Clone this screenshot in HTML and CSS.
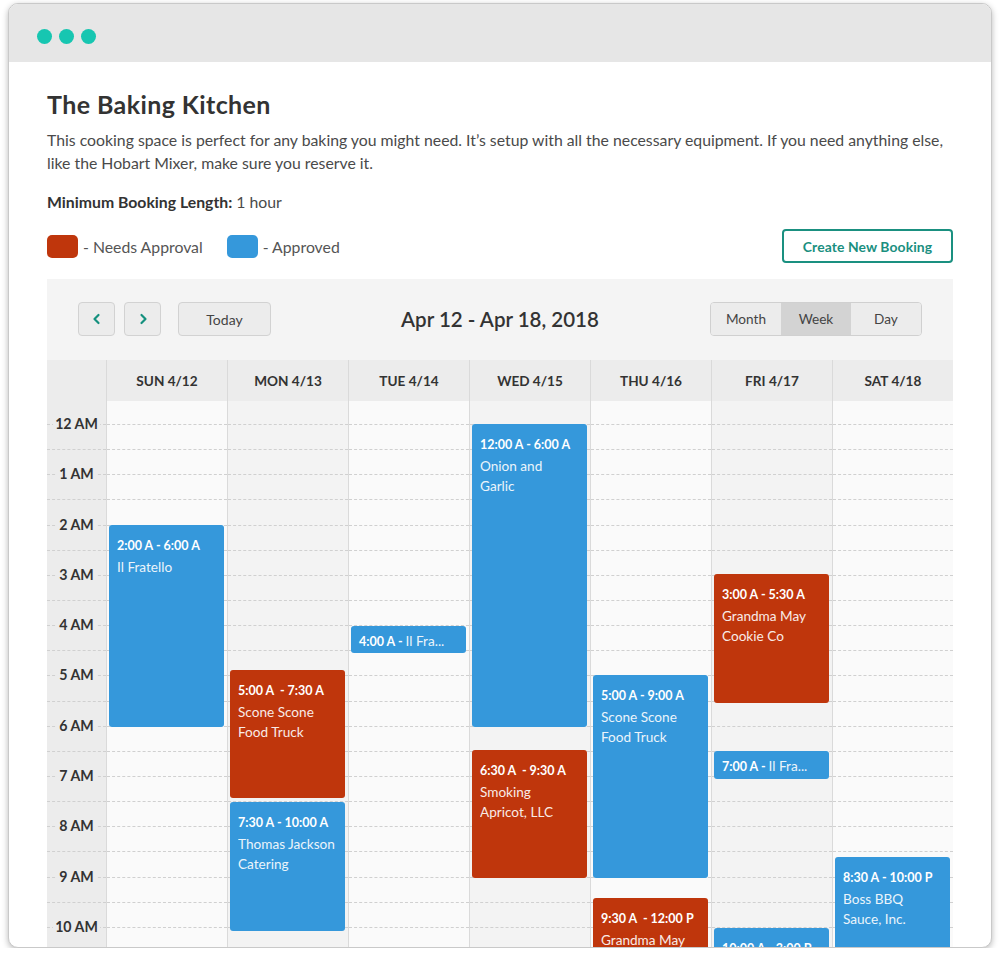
FILE: index.html
```html
<!DOCTYPE html>
<html lang="en">
<head>
<meta charset="utf-8">
<title>The Baking Kitchen</title>
<link rel="stylesheet" href="styles.css">
</head>
<body>
<div class="window">
  <div class="titlebar">
    <span class="dot"></span><span class="dot"></span><span class="dot"></span>
  </div>
  <main class="content">
    <h1 class="title">The Baking Kitchen</h1>
    <p class="desc">This cooking space is perfect for any baking you might need. It’s setup with all the necessary equipment. If you need anything else, like the Hobart Mixer, make sure you reserve it.</p>
    <p class="min"><strong>Minimum Booking Length:</strong> 1 hour</p>
    <div class="legend-row">
      <div class="legend">
        <span class="legend-item"><span class="swatch red"></span>- Needs Approval</span>
        <span class="legend-item"><span class="swatch blue"></span>- Approved</span>
      </div>
      <button class="btn-create">Create New Booking</button>
    </div>

    <section class="calendar">
      <div class="toolbar">
        <div class="nav">
          <button class="btn btn-icon" aria-label="Previous"><svg width="10" height="12" viewBox="0 0 10 12"><polyline points="6.5,2 2.5,6 6.5,10" fill="none" stroke="#14907e" stroke-width="2.2" stroke-linecap="round" stroke-linejoin="round"/></svg></button>
          <button class="btn btn-icon" aria-label="Next"><svg width="10" height="12" viewBox="0 0 10 12"><polyline points="3.5,2 7.5,6 3.5,10" fill="none" stroke="#14907e" stroke-width="2.2" stroke-linecap="round" stroke-linejoin="round"/></svg></button>
          <button class="btn btn-today">Today</button>
        </div>
        <h2 class="range">Apr 12 - Apr 18, 2018</h2>
        <div class="views">
          <button class="view">Month</button><button class="view active">Week</button><button class="view">Day</button>
        </div>
      </div>

      <div class="head">
        <div class="head-gutter"></div>
        <div class="head-day">SUN 4/12</div>
        <div class="head-day">MON 4/13</div>
        <div class="head-day">TUE 4/14</div>
        <div class="head-day">WED 4/15</div>
        <div class="head-day">THU 4/16</div>
        <div class="head-day">FRI 4/17</div>
        <div class="head-day">SAT 4/18</div>
      </div>

      <div class="grid">
        <div class="gutter">
          <div class="slot"><span class="hour">12 AM</span></div><div class="slot"></div>
          <div class="slot"><span class="hour">1 AM</span></div><div class="slot"></div>
          <div class="slot"><span class="hour">2 AM</span></div><div class="slot"></div>
          <div class="slot"><span class="hour">3 AM</span></div><div class="slot"></div>
          <div class="slot"><span class="hour">4 AM</span></div><div class="slot"></div>
          <div class="slot"><span class="hour">5 AM</span></div><div class="slot"></div>
          <div class="slot"><span class="hour">6 AM</span></div><div class="slot"></div>
          <div class="slot"><span class="hour">7 AM</span></div><div class="slot"></div>
          <div class="slot"><span class="hour">8 AM</span></div><div class="slot"></div>
          <div class="slot"><span class="hour">9 AM</span></div><div class="slot"></div>
          <div class="slot"><span class="hour">10 AM</span></div><div class="slot"></div>
          <div class="slot"><span class="hour">11 AM</span></div><div class="slot"></div>
        </div>

        <div class="day light">
          <div class="slot"></div><div class="slot"></div><div class="slot"></div><div class="slot"></div><div class="slot"></div><div class="slot"></div><div class="slot"></div><div class="slot"></div><div class="slot"></div><div class="slot"></div><div class="slot"></div><div class="slot"></div><div class="slot"></div><div class="slot"></div><div class="slot"></div><div class="slot"></div><div class="slot"></div><div class="slot"></div><div class="slot"></div><div class="slot"></div><div class="slot"></div><div class="slot"></div><div class="slot"></div><div class="slot"></div>
          <div class="event approved" style="top:124px;height:202px"><div class="ev-time">2:00 A - 6:00 A</div><div class="ev-name">Il Fratello</div></div>
        </div>

        <div class="day shade">
          <div class="slot"></div><div class="slot"></div><div class="slot"></div><div class="slot"></div><div class="slot"></div><div class="slot"></div><div class="slot"></div><div class="slot"></div><div class="slot"></div><div class="slot"></div><div class="slot"></div><div class="slot"></div><div class="slot"></div><div class="slot"></div><div class="slot"></div><div class="slot"></div><div class="slot"></div><div class="slot"></div><div class="slot"></div><div class="slot"></div><div class="slot"></div><div class="slot"></div><div class="slot"></div><div class="slot"></div>
          <div class="event pending" style="top:269px;height:128px"><div class="ev-time">5:00 A&nbsp; - 7:30 A</div><div class="ev-name">Scone Scone Food Truck</div></div>
          <div class="event approved" style="top:401px;height:129px"><div class="ev-time">7:30 A - 10:00 A</div><div class="ev-name">Thomas Jackson Catering</div></div>
        </div>

        <div class="day light">
          <div class="slot"></div><div class="slot"></div><div class="slot"></div><div class="slot"></div><div class="slot"></div><div class="slot"></div><div class="slot"></div><div class="slot"></div><div class="slot"></div><div class="slot"></div><div class="slot"></div><div class="slot"></div><div class="slot"></div><div class="slot"></div><div class="slot"></div><div class="slot"></div><div class="slot"></div><div class="slot"></div><div class="slot"></div><div class="slot"></div><div class="slot"></div><div class="slot"></div><div class="slot"></div><div class="slot"></div>
          <div class="event approved short" style="top:225px;height:27px"><span class="ev-time-inline">4:00 A - </span><span class="ev-name-inline">Il Fra...</span></div>
        </div>

        <div class="day shade">
          <div class="slot"></div><div class="slot"></div><div class="slot"></div><div class="slot"></div><div class="slot"></div><div class="slot"></div><div class="slot"></div><div class="slot"></div><div class="slot"></div><div class="slot"></div><div class="slot"></div><div class="slot"></div><div class="slot"></div><div class="slot"></div><div class="slot"></div><div class="slot"></div><div class="slot"></div><div class="slot"></div><div class="slot"></div><div class="slot"></div><div class="slot"></div><div class="slot"></div><div class="slot"></div><div class="slot"></div>
          <div class="event approved" style="top:23px;height:303px"><div class="ev-time">12:00 A - 6:00 A</div><div class="ev-name">Onion and Garlic</div></div>
          <div class="event pending" style="top:349px;height:128px"><div class="ev-time">6:30 A&nbsp; - 9:30 A</div><div class="ev-name">Smoking Apricot, LLC</div></div>
        </div>

        <div class="day light">
          <div class="slot"></div><div class="slot"></div><div class="slot"></div><div class="slot"></div><div class="slot"></div><div class="slot"></div><div class="slot"></div><div class="slot"></div><div class="slot"></div><div class="slot"></div><div class="slot"></div><div class="slot"></div><div class="slot"></div><div class="slot"></div><div class="slot"></div><div class="slot"></div><div class="slot"></div><div class="slot"></div><div class="slot"></div><div class="slot"></div><div class="slot"></div><div class="slot"></div><div class="slot"></div><div class="slot"></div>
          <div class="event approved" style="top:274px;height:203px"><div class="ev-time">5:00 A - 9:00 A</div><div class="ev-name">Scone Scone Food Truck</div></div>
          <div class="event pending" style="top:497px;height:128px"><div class="ev-time">9:30 A&nbsp; - 12:00 P</div><div class="ev-name">Grandma May Cookie Co</div></div>
        </div>

        <div class="day shade">
          <div class="slot"></div><div class="slot"></div><div class="slot"></div><div class="slot"></div><div class="slot"></div><div class="slot"></div><div class="slot"></div><div class="slot"></div><div class="slot"></div><div class="slot"></div><div class="slot"></div><div class="slot"></div><div class="slot"></div><div class="slot"></div><div class="slot"></div><div class="slot"></div><div class="slot"></div><div class="slot"></div><div class="slot"></div><div class="slot"></div><div class="slot"></div><div class="slot"></div><div class="slot"></div><div class="slot"></div>
          <div class="event pending" style="top:173px;height:129px"><div class="ev-time">3:00 A - 5:30 A</div><div class="ev-name">Grandma May Cookie Co</div></div>
          <div class="event approved short" style="top:350px;height:28px"><span class="ev-time-inline">7:00 A - </span><span class="ev-name-inline">Il Fra...</span></div>
          <div class="event approved" style="top:527px;height:252px"><div class="ev-time">10:00 A - 3:00 P</div><div class="ev-name">Il Fratello</div></div>
        </div>

        <div class="day light">
          <div class="slot"></div><div class="slot"></div><div class="slot"></div><div class="slot"></div><div class="slot"></div><div class="slot"></div><div class="slot"></div><div class="slot"></div><div class="slot"></div><div class="slot"></div><div class="slot"></div><div class="slot"></div><div class="slot"></div><div class="slot"></div><div class="slot"></div><div class="slot"></div><div class="slot"></div><div class="slot"></div><div class="slot"></div><div class="slot"></div><div class="slot"></div><div class="slot"></div><div class="slot"></div><div class="slot"></div>
          <div class="event approved" style="top:456px;height:680px"><div class="ev-time">8:30 A - 10:00 P</div><div class="ev-name">Boss BBQ Sauce, Inc.</div></div>
        </div>
      </div>
    </section>
  </main>
</div>
</body>
</html>
```

FILE: styles.css
```css
* { box-sizing: border-box; }

html, body {
  margin: 0;
  background: #ffffff;
}

body {
  font-family: "Lato", "Open Sans", "Liberation Sans", sans-serif;
  color: #333333;
}

.window {
  margin: 3px 8px 0;
  height: 945px;
  border: 1px solid #c9c9c9;
  border-radius: 10px;
  overflow: hidden;
  background: #ffffff;
  box-shadow: 0 2px 6px rgba(0, 0, 0, 0.28);
  display: flex;
  flex-direction: column;
}

.titlebar {
  flex: none;
  height: 58px;
  background: #e6e6e6;
  display: flex;
  align-items: flex-start;
  gap: 7px;
  padding: 25px 0 0 28px;
}

.dot {
  width: 15px;
  height: 15px;
  border-radius: 50%;
  background: #17c6b1;
}

.content {
  flex: 1;
  min-height: 0;
  padding: 0 38px;
  display: flex;
  flex-direction: column;
}

.title {
  margin: 27px 0 0;
  font-size: 25px;
  line-height: 30px;
  letter-spacing: 0.4px;
  font-weight: 700;
  color: #333333;
}

.desc {
  margin: 9px 0 0;
  font-size: 15.8px;
  line-height: 23px;
  color: #4a4a4a;
}

.min {
  margin: 16px 0 0;
  font-size: 15.8px;
  line-height: 23px;
  color: #4a4a4a;
}

.min strong {
  color: #333333;
  font-weight: 700;
}

.legend-row {
  margin-top: 16px;
  display: flex;
  justify-content: space-between;
  align-items: center;
}

.legend {
  display: flex;
  gap: 24px;
  align-items: center;
}

.legend-item {
  display: flex;
  align-items: center;
  gap: 5px;
  font-size: 15.8px;
  color: #555555;
}

.swatch {
  width: 31px;
  height: 23px;
  border-radius: 5px;
}

.swatch.red { background: #bf360c; }
.swatch.blue { background: #3598db; }

.btn-create {
  width: 171px;
  height: 34px;
  border: 2px solid #1a9080;
  border-radius: 4px;
  background: #ffffff;
  color: #1a8f7f;
  font-family: inherit;
  font-size: 13.9px;
  font-weight: 700;
  letter-spacing: 0.1px;
}

.calendar {
  margin-top: 16px;
  flex: 1;
  min-height: 0;
  display: flex;
  flex-direction: column;
  background: #f4f4f4;
}

.toolbar {
  flex: none;
  height: 81px;
  padding: 23px 31px 0;
  display: grid;
  grid-template-columns: 1fr auto 1fr;
  align-items: start;
}

.nav {
  display: flex;
  gap: 9px;
}

.btn {
  height: 34px;
  border: 1px solid #d2d2d2;
  border-radius: 4px;
  background: #ececec;
  font-family: inherit;
  font-size: 14px;
  color: #444444;
  padding: 0;
  display: flex;
  align-items: center;
  justify-content: center;
}

.btn-icon { width: 37px; }

.btn-today {
  width: 93px;
  margin-left: 8px;
}

.range {
  margin: 0;
  height: 34px;
  line-height: 34px;
  font-size: 20.5px;
  font-weight: 600;
  color: #333333;
}

.views {
  justify-self: end;
  display: flex;
  border: 1px solid #d0d0d0;
  border-radius: 4px;
  overflow: hidden;
  height: 34px;
}

.view {
  width: 70px;
  border: 0;
  background: #ececec;
  font-family: inherit;
  font-size: 13.6px;
  color: #444444;
  padding: 0;
}

.view.active { background: #d3d3d3; }

.head {
  flex: none;
  height: 41px;
  display: grid;
  grid-template-columns: 59px repeat(7, 1fr);
  background: #ececec;
}

.head-day {
  border-left: 1px solid #dadada;
  display: flex;
  align-items: center;
  justify-content: center;
  font-size: 13.6px;
  font-weight: 700;
  color: #333333;
}

.grid {
  flex: 1;
  min-height: 0;
  overflow: hidden;
  display: grid;
  grid-template-columns: 59px repeat(7, 1fr);
  align-items: start;
}

.gutter, .day {
  padding-top: 23px;
  height: 700px;
}

.gutter { background: #ececec; }

.day {
  position: relative;
  border-left: 1px solid #dadada;
}

.day.light { background: #fafafa; }
.day.shade { background: #f3f3f3; }

.slot {
  height: 25.15px;
  border-top: 1px dashed #d0d0d0;
  position: relative;
}

.hour {
  position: relative;
  top: -9px;
  display: table;
  margin: 0 auto;
  padding: 0 2px;
  background: #ececec;
  font-size: 14.2px;
  line-height: 16px;
  font-weight: 700;
  color: #333333;
}

.event {
  position: absolute;
  left: 2px;
  right: 3px;
  border-radius: 3px;
  padding: 13px 9px 0 8px;
  color: #ffffff;
  overflow: hidden;
}

.event.approved { background: #3598db; }
.event.pending { background: #bf360c; }

.ev-time {
  font-size: 12.5px;
  line-height: 16px;
  font-weight: 700;
}

.ev-name {
  margin-top: 3px;
  font-size: 13.6px;
  line-height: 20px;
  opacity: 0.9;
}

.event.short {
  padding: 5px 4px 0 8px;
  white-space: nowrap;
  line-height: 17px;
}

.ev-time-inline {
  font-size: 12.5px;
  font-weight: 700;
}

.ev-name-inline {
  font-size: 13.6px;
  opacity: 0.9;
}
```
